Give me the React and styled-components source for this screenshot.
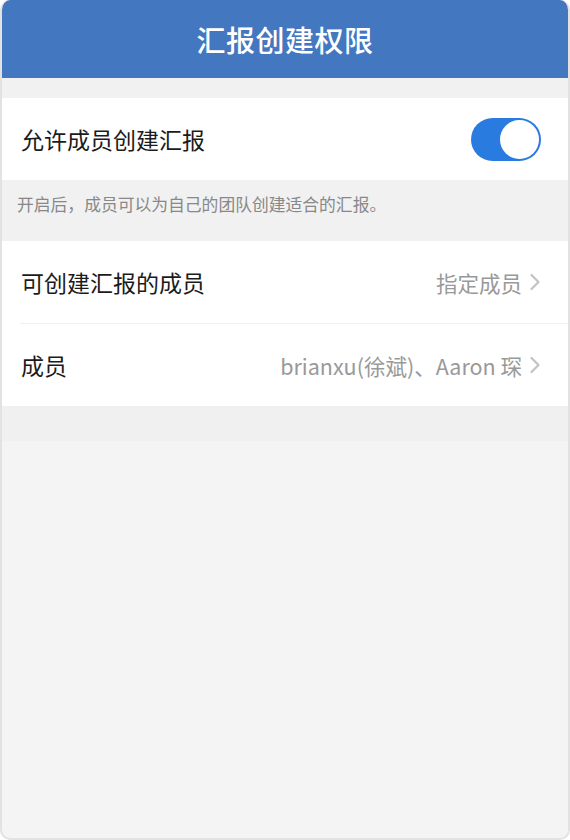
import React, { useState } from "react";
import styled, { createGlobalStyle } from "styled-components";

const GlobalStyle = createGlobalStyle`
  html, body {
    margin: 0;
    padding: 0;
    background: #ffffff;
  }
  body {
    font-family: "Noto Sans CJK SC", "Noto Sans", sans-serif;
  }
`;

const App = () => {
  const [allowed, setAllowed] = useState(true);

  return (
    <Frame>
      <GlobalStyle />
      <Header>汇报创建权限</Header>
      <Gap />
      <Group>
        <Row>
          <Label>允许成员创建汇报</Label>
          <Toggle on={allowed} onClick={() => setAllowed(!allowed)}>
            <Knob on={allowed} />
          </Toggle>
        </Row>
      </Group>
      <Hint>开启后，成员可以为自己的团队创建适合的汇报。</Hint>
      <Group>
        <Row divider>
          <Label>可创建汇报的成员</Label>
          <Value>
            指定成员
            <Chevron />
          </Value>
        </Row>
        <Row>
          <Label>成员</Label>
          <Value>
            brianxu(徐斌)、Aaron 琛
            <Chevron />
          </Value>
        </Row>
      </Group>
      <BottomGap />
    </Frame>
  );
};

const Chevron = () => (
  <svg width="12" height="18" viewBox="0 0 12 18">
    <path
      d="M2.5 2 L9.5 9 L2.5 16"
      fill="none"
      stroke="#c3c3c3"
      strokeWidth="2.2"
      strokeLinecap="round"
      strokeLinejoin="round"
    />
  </svg>
);

export default App;

// styled components
const Frame = styled.div`
  box-sizing: border-box;
  width: 570px;
  height: 840px;
  border: 2px solid #e2e2e2;
  border-top: none;
  border-radius: 10px;
  overflow: hidden;
  background: #f4f4f4;
  display: flex;
  flex-direction: column;
`;

const Header = styled.div`
  height: 78px;
  flex-shrink: 0;
  background: #4377bf;
  color: #ffffff;
  font-size: 29px;
  font-weight: 500;
  display: flex;
  align-items: center;
  justify-content: center;
  letter-spacing: 0.5px;
  margin: 0 -2px;
`;

const Gap = styled.div`
  height: 20px;
  background: #f1f1f1;
`;

const Group = styled.div`
  background: #ffffff;
`;

const Row = styled.div`
  height: ${p => (p.divider ? "83px" : "82px")};
  box-sizing: border-box;
  margin-left: 18px;
  padding-right: 28px;
  display: flex;
  align-items: center;
  justify-content: space-between;
  border-bottom: ${p => (p.divider ? "1px solid #f0f0f0" : "none")};
`;

const Label = styled.div`
  font-size: 23px;
  color: #1b1b1b;
  padding-left: 1px;
`;

const Value = styled.div`
  display: flex;
  align-items: center;
  gap: 7px;
  font-size: 21.5px;
  color: #999999;
  margin-right: -1px;
`;

const Toggle = styled.div`
  width: 70px;
  height: 43px;
  border-radius: 22px;
  background: ${p => (p.on ? "#2a7be0" : "#e5e5e5")};
  display: flex;
  align-items: center;
  justify-content: ${p => (p.on ? "flex-end" : "flex-start")};
  padding: 0 2px;
  box-sizing: border-box;
  margin-right: -1px;
  cursor: pointer;
`;

const Knob = styled.div`
  width: 39px;
  height: 39px;
  border-radius: 50%;
  background: #ffffff;
`;

const Hint = styled.div`
  height: 61px;
  background: #f1f1f1;
  color: #888888;
  font-size: 16.8px;
  padding-left: 15px;
  display: flex;
  align-items: center;
  padding-bottom: 13px;
  box-sizing: border-box;
`;

const BottomGap = styled.div`
  height: 35px;
  background: #f0f0f0;
`;
